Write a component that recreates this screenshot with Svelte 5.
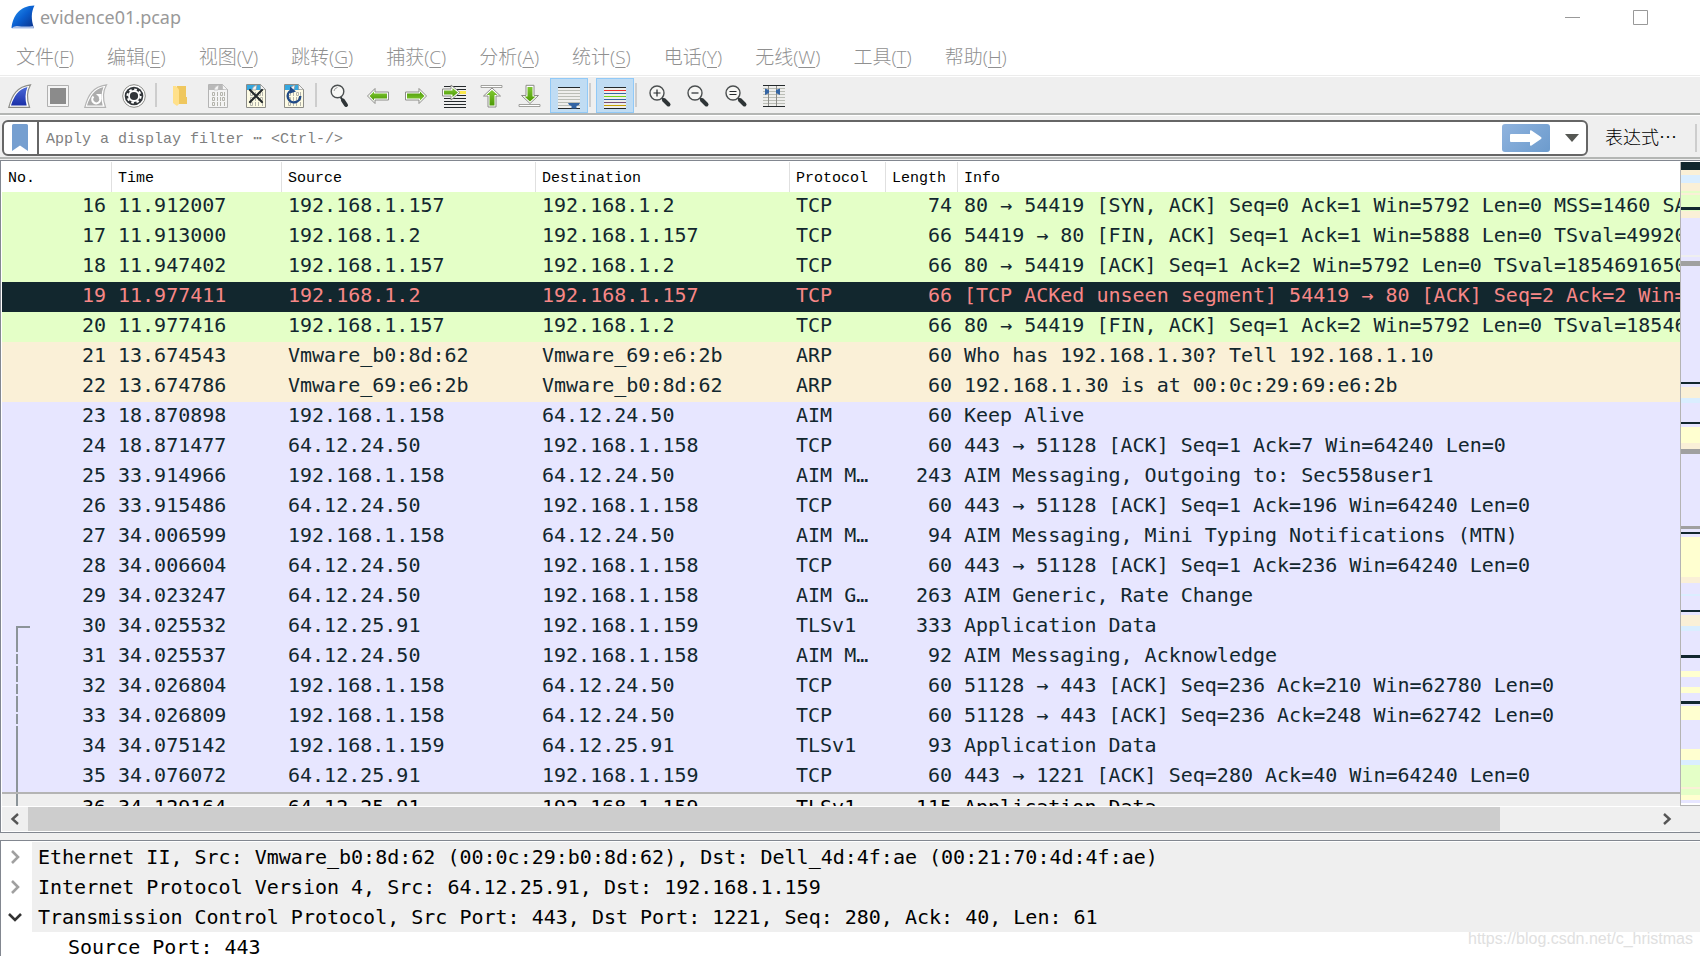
<script>
  const menus = [
    ["文件", "F"],
    ["编辑", "E"],
    ["视图", "V"],
    ["跳转", "G"],
    ["捕获", "C"],
    ["分析", "A"],
    ["统计", "S"],
    ["电话", "Y"],
    ["无线", "W"],
    ["工具", "T"],
    ["帮助", "H"],
  ]

  const toolGroups = [
    ["start", "stop", "restart", "options"],
    ["open", "save", "close", "reload"],
    ["find", "back", "forward", "goto", "first", "last", "autoscroll"],
    ["colorize"],
    ["zoomIn", "zoomOut", "zoomReset", "resize"],
  ]

  const titles = {
    start: "开始捕获",
    stop: "停止捕获",
    restart: "重新开始捕获",
    options: "捕获选项",
    open: "打开",
    save: "保存",
    close: "关闭",
    reload: "重新加载",
    find: "查找分组",
    back: "后退",
    forward: "前进",
    goto: "转到分组",
    first: "首个分组",
    last: "最新分组",
    autoscroll: "自动滚动",
    colorize: "着色",
    zoomIn: "放大",
    zoomOut: "缩小",
    zoomReset: "普通大小",
    resize: "调整列宽",
  }

  let active = $state({ autoscroll: true, colorize: true })
  let filter = $state("")

  const columns = ["No.", "Time", "Source", "Destination", "Protocol", "Length", "Info"]

  const packets = [
    ["tcp", 16, "11.912007", "192.168.1.157", "192.168.1.2", "TCP", 74, "80 → 54419 [SYN, ACK] Seq=0 Ack=1 Win=5792 Len=0 MSS=1460 SA"],
    ["tcp", 17, "11.913000", "192.168.1.2", "192.168.1.157", "TCP", 66, "54419 → 80 [FIN, ACK] Seq=1 Ack=1 Win=5888 Len=0 TSval=49920"],
    ["tcp", 18, "11.947402", "192.168.1.157", "192.168.1.2", "TCP", 66, "80 → 54419 [ACK] Seq=1 Ack=2 Win=5792 Len=0 TSval=1854691650"],
    ["bad", 19, "11.977411", "192.168.1.2", "192.168.1.157", "TCP", 66, "[TCP ACKed unseen segment] 54419 → 80 [ACK] Seq=2 Ack=2 Win="],
    ["tcp", 20, "11.977416", "192.168.1.157", "192.168.1.2", "TCP", 66, "80 → 54419 [FIN, ACK] Seq=1 Ack=2 Win=5792 Len=0 TSval=18546"],
    ["arp", 21, "13.674543", "Vmware_b0:8d:62", "Vmware_69:e6:2b", "ARP", 60, "Who has 192.168.1.30? Tell 192.168.1.10"],
    ["arp", 22, "13.674786", "Vmware_69:e6:2b", "Vmware_b0:8d:62", "ARP", 60, "192.168.1.30 is at 00:0c:29:69:e6:2b"],
    ["plain", 23, "18.870898", "192.168.1.158", "64.12.24.50", "AIM", 60, "Keep Alive"],
    ["plain", 24, "18.871477", "64.12.24.50", "192.168.1.158", "TCP", 60, "443 → 51128 [ACK] Seq=1 Ack=7 Win=64240 Len=0"],
    ["plain", 25, "33.914966", "192.168.1.158", "64.12.24.50", "AIM M…", 243, "AIM Messaging, Outgoing to: Sec558user1"],
    ["plain", 26, "33.915486", "64.12.24.50", "192.168.1.158", "TCP", 60, "443 → 51128 [ACK] Seq=1 Ack=196 Win=64240 Len=0"],
    ["plain", 27, "34.006599", "192.168.1.158", "64.12.24.50", "AIM M…", 94, "AIM Messaging, Mini Typing Notifications (MTN)"],
    ["plain", 28, "34.006604", "64.12.24.50", "192.168.1.158", "TCP", 60, "443 → 51128 [ACK] Seq=1 Ack=236 Win=64240 Len=0"],
    ["plain", 29, "34.023247", "64.12.24.50", "192.168.1.158", "AIM G…", 263, "AIM Generic, Rate Change"],
    ["plain", 30, "34.025532", "64.12.25.91", "192.168.1.159", "TLSv1", 333, "Application Data"],
    ["plain", 31, "34.025537", "64.12.24.50", "192.168.1.158", "AIM M…", 92, "AIM Messaging, Acknowledge"],
    ["plain", 32, "34.026804", "192.168.1.158", "64.12.24.50", "TCP", 60, "51128 → 443 [ACK] Seq=236 Ack=210 Win=62780 Len=0"],
    ["plain", 33, "34.026809", "192.168.1.158", "64.12.24.50", "TCP", 60, "51128 → 443 [ACK] Seq=236 Ack=248 Win=62742 Len=0"],
    ["plain", 34, "34.075142", "192.168.1.159", "64.12.25.91", "TLSv1", 93, "Application Data"],
    ["plain", 35, "34.076072", "64.12.25.91", "192.168.1.159", "TCP", 60, "443 → 1221 [ACK] Seq=280 Ack=40 Win=64240 Len=0"],
    ["selected", 36, "34.129164", "64.12.25.91", "192.168.1.159", "TLSv1", 115, "Application Data"],
  ]

  // which piece of the conversation line a packet carries
  function lineOf(no) {
    if (no < 30) return ""
    if (no === 30) return "line-start"
    return no < 34 ? "line-other" : "line-in"
  }

  // k bad tcp, t arp, b http, g tcp, l plain, y tls, e ignored, m marked
  const overview =
    "k8 t5 b8 t8 g2 t2 g12 k3 g1 t7 l37 e2 l4 m5 l116 k2 l3 t11 b5 l19 k2 l3 y16 t6 m5 l72 m3 l3 k2 l3 y40 t6 l11 b2 l14 k2 l3 t11 b5 l24 k3 l13 y6 l10 y6 l8 k3 l2 y14 l29 y11 b5 g22 t2 g6 y5 l3 w2"
      .split(" ")
      .map(s => ({ kind: s[0], size: Number(s.slice(1)) }))

  const details = [
    { open: false, text: "Ethernet II, Src: Vmware_b0:8d:62 (00:0c:29:b0:8d:62), Dst: Dell_4d:4f:ae (00:21:70:4d:4f:ae)" },
    { open: false, text: "Internet Protocol Version 4, Src: 64.12.25.91, Dst: 192.168.1.159" },
    { open: true, text: "Transmission Control Protocol, Src Port: 443, Dst Port: 1221, Seq: 280, Ack: 40, Len: 61", fields: ["Source Port: 443"] },
  ]
</script>

{#snippet page(fold, body, edge)}
  <path d="M2.500.5h14l5 5v18h-19z" fill={body} stroke={edge} />
  <path d="M3 1h13.500l1.500 5H3z" fill={fold} />
  <path d="M8 6q.5-4 5-5l-1 5zM16.500.5v5h5z" fill="#f4f4f4" stroke={edge} stroke-width=".6" />
  <g fill="none" stroke="#b4b4ac">
    <path d="M6.500 8.500h2v3h-2zM11.500 8v4M14.500 8.500h2v3h-2zM18.500 8v4M6.500 13.500h2v3h-2zM11.500 13v4M14.500 13v4M16.500 13.500h2v3h-2zM6.500 18.500h2v3h-2zM11.500 18v4M14.500 18v4M18.500 18v4" />
  </g>
{/snippet}

{#snippet lens()}
  <path d="M14 14l2 2" stroke="#2e3436" stroke-width="2" />
  <path d="M16 16l4.500 4.500" stroke="#2e3436" stroke-width="4" stroke-linecap="round" />
  <circle cx="9" cy="9" r="7" fill="#f6f6f4" stroke="#4b4f50" stroke-width="1.400" />
{/snippet}

{#snippet arrow()}
  <path d="M1.500 12 9 4.500V8h13.500v8H9v3.500z" fill="#fff" stroke="#8c8c88" stroke-linejoin="round" />
  <path d="M3.500 12 8 7.500v2h13v5H8v2z" fill="url(#green)" />
{/snippet}

{#snippet icon(name)}
  <svg width="24" height="24" viewBox="0 0 24 24" fill="none" aria-hidden="true">
    {#if name === "start"}
      <path d="M.8 23.300C4 11 9 2.500 22.500.8 19 7 18.500 15 21.500 23.300z" fill="#fff" stroke="#8c8c88" stroke-width="1.200" />
      <path d="M3 21.500C6 12 10.500 5 19.500 3c-2.500 6-2.500 12.500-.8 18.500z" fill="url(#fin)" />
    {:else if name === "stop"}
      <path d="M1.500 1.500h21v21h-21z" fill="#f4f4f4" stroke="#b0b0b0" />
      <path d="M4 4h16v16H4z" fill="#8b8b8b" />
    {:else if name === "restart"}
      <path d="M.8 23.300C4 11 9 2.500 22.500.8 19 7 18.500 15 21.500 23.300z" fill="#fff" stroke="#b4b4b4" stroke-width="1.200" />
      <path d="M3 21.500C6 12 10.500 5 19.500 3c-2.500 6-2.500 12.500-.8 18.500z" fill="#adadad" />
      <path d="M9.500 12.500a4 4 0 1 0 6 .5" stroke="#fff" stroke-width="2.200" />
      <path d="M12 10h5.500v5.500z" fill="#fff" />
    {:else if name === "options"}
      <circle cx="12" cy="12" r="11.300" fill="#fff" stroke="#8c8c88" />
      <circle cx="12" cy="12" r="9.300" fill="#32363a" />
      <circle cx="12" cy="12" r="5" stroke="#fff" stroke-width="1.800" />
      <circle cx="12" cy="12" r="6.600" stroke="#fff" stroke-width="2" stroke-dasharray="2.600 2.584" />
      <circle cx="12" cy="12" r="2.800" fill="#32363a" />
    {:else if name === "open"}
      <path d="M9 2h9v11h1v7H9z" fill="#efc75e" />
      <path d="M5 2h3l3 3.500V20l-2 2-4-3z" fill="#ffe08a" />
    {:else if name === "save"}
      {@render page("#b9b9b9", "#f4f4f4", "#b4b4b4")}
    {:else if name === "close"}
      {@render page("#35a8e0", "#fdfbe4", "#8c8c88")}
      <path d="M6 6l12 12M18 6 6 18" stroke="#24292b" stroke-width="2.200" stroke-linecap="round" />
    {:else if name === "reload"}
      {@render page("#35a8e0", "#fdfbe4", "#8c8c88")}
      <path d="M9 6.500A6.300 6.300 0 1 0 18.300 12" stroke="#204a87" stroke-width="2.400" />
      <path d="M8 2.500v7l6-2z" fill="#204a87" />
    {:else if name === "find"}
      <path d="M12.500 13l2 3" stroke="#2e3436" stroke-width="2" />
      <path d="M15 16.500l3 4.500" stroke="#2e3436" stroke-width="4" stroke-linecap="round" />
      <circle cx="9.500" cy="7.500" r="6.300" fill="#f8f8f6" stroke="#4b4f50" stroke-width="1.400" />
      <path d="M6 7q.5-3 3.500-3.500" stroke="#999" />
    {:else if name === "back"}
      {@render arrow()}
    {:else if name === "forward"}
      <g transform="rotate(180 12 12)">{@render arrow()}</g>
    {:else if name === "goto"}
      <path d="M2 2.500h22M2 5.500h22M2 11.500h22M2 14.500h22M2 17.500h22M2 20.500h22M2 23.500h22" stroke="#24292b" />
      <path d="M17 8.500h7" stroke="#fce94f" stroke-width="3" />
      <path d="M.5 5H9V1l9 7.500L9 16v-4H.5z" fill="#fff" stroke="#8c8c88" stroke-linejoin="round" />
      <path d="M2 6.500h8.500V4l5.500 4.500-5.500 4.500v-2.500H2z" fill="url(#green)" />
    {:else if name === "first"}
      <path d="M1 1.500h21v2H1z" fill="#fff" stroke="#8c8c88" stroke-width=".8" />
      <path d="M12 4l8.500 8H16v11H8V12H3.500z" fill="#fff" stroke="#8c8c88" stroke-linejoin="round" />
      <path d="M12 6l5.500 5h-3v10.500h-5V11h-3z" fill="url(#green)" />
    {:else if name === "last"}
      <path d="M1 20.500h21v2H1z" fill="#fff" stroke="#8c8c88" stroke-width=".8" />
      <path d="M12 19.500l8.500-8H16V1.300H8v10.200H3.500z" fill="#fff" stroke="#8c8c88" stroke-linejoin="round" />
      <path d="M12 17.500l5.500-5h-3V3h-5v9.500h-3z" fill="url(#green)" />
    {:else if name === "autoscroll"}
      <path d="M1 3h22v22H1z" fill="#eeeeec" />
      <path d="M1 6.500h22M1 9.500h22M1 12.500h22M1 15.500h22M1 18.500h22M1 21.500h22" stroke="#babdb6" />
      <path d="M1 3.500h22M1 24.500h22" stroke="#24292b" />
      <path d="M11 19h12q-.5 2.500-3.500 3v2.500h-5V22q-3-.5-3.500-3z" fill="#3465a4" />
    {:else if name === "colorize"}
      <path d="M1 3h22v22H1z" fill="#eeeeec" />
      <path d="M1 3.500h22M1 24.500h22" stroke="#24292b" />
      <path d="M1 6.500h22" stroke="#ef2929" />
      <path d="M1 9.500h22" stroke="#3465a4" />
      <path d="M1 12.500h22" stroke="#73d216" />
      <path d="M1 15.500h22" stroke="#3465a4" />
      <path d="M1 18.500h22" stroke="#75507b" />
      <path d="M1 21.500h22" stroke="#c4a000" />
    {:else if name === "zoomIn"}
      {@render lens()}
      <path d="M5.500 9h7M9 5.500v7" stroke="#24292b" stroke-width="1.200" />
    {:else if name === "zoomOut"}
      {@render lens()}
      <path d="M5.500 9h7" stroke="#24292b" stroke-width="1.200" />
    {:else if name === "zoomReset"}
      {@render lens()}
      <path d="M5.500 7.500h7M5.500 10.500h7" stroke="#24292b" stroke-width="1.200" />
    {:else if name === "resize"}
      <path d="M1 1h22v22H1z" fill="#eeeeec" />
      <path d="M1 4.500h22M1 7.500h22M1 10.500h22M1 13.500h22M1 16.500h22M1 19.500h22" stroke="#babdb6" />
      <path d="M6.500 1v22M14.500 1v22" stroke="#8c8c88" />
      <path d="M1 1.500h22M1 22.500h22" stroke="#24292b" />
      <path d="M3 4.500l4 1.500v3l-4 2zM18 4.500l-4 1.500v3l4 2z" fill="#3465a4" />
    {/if}
  </svg>
{/snippet}

<div class="window">
  <header class="titlebar">
    <svg class="logo" width="24" height="24" viewBox="0 0 24 24" aria-hidden="true">
      <defs>
        <linearGradient id="logoFill" x1="0" y1="0" x2="1" y2="1">
          <stop offset="0" stop-color="#2b9cf5" />
          <stop offset=".5" stop-color="#0a5fd0" />
          <stop offset="1" stop-color="#0b2f86" />
        </linearGradient>
        <linearGradient id="fin" x1="0" y1="0" x2="0" y2="1">
          <stop offset="0" stop-color="#4a68d8" />
          <stop offset="1" stop-color="#1a2fa8" />
        </linearGradient>
        <linearGradient id="green" x1="0" y1="0" x2="0" y2="1">
          <stop offset="0" stop-color="#7fc832" />
          <stop offset="1" stop-color="#4e9a06" />
        </linearGradient>
      </defs>
      <path d="M.5 23C2 11 8 1 23.500.5 20 7 20 15 23 23z" fill="url(#logoFill)" />
      <path d="M.5 23.500q2-3 6-2.500t8 .5 8-.5l.5 2.500z" fill="#a9bfe8" />
    </svg>
    <h1>evidence01.pcap</h1>
    <div class="controls">
      <button aria-label="最小化">
        <svg width="15" height="16" viewBox="0 0 15 16"><path d="M0 8.500h15" stroke="#999" /></svg>
      </button>
      <button aria-label="最大化">
        <svg width="15" height="16" viewBox="0 0 15 16"><path d="M.5 1.500h14v14H.5z" fill="none" stroke="#999" /></svg>
      </button>
    </div>
  </header>

  <nav class="menubar">
    {#each menus as [label, key]}
      <button>{label}(<u>{key}</u>)</button>
    {/each}
  </nav>

  <div class="toolbar" role="toolbar">
    {#each toolGroups as group, i}
      {#if i > 0}<span class="sep"></span>{/if}
      {#each group as name}
        <button class:active={active[name]} aria-label={titles[name]} title={titles[name]}>
          {@render icon(name)}
        </button>
      {/each}
    {/each}
  </div>

  <div class="filterbar">
    <div class="filter">
      <button class="bookmark" aria-label="管理过滤器">
        <svg width="16" height="27" viewBox="0 0 16 27"><path d="M0 1.500Q0 0 1.500 0h13Q16 0 16 1.500V27l-8-5.500L0 27z" fill="#769fd0" /></svg>
      </button>
      <input type="text" bind:value={filter} aria-label="显示过滤器" placeholder="Apply a display filter ⋯ <Ctrl-/>" />
      <button class="apply" aria-label="应用过滤器">
        <svg width="32" height="16" viewBox="0 0 32 16"><path d="M1 4h19V1q0-1 1.500-.5L31 7q1 1 0 2l-9.500 6.500Q20 16 20 15v-3H1q-1 0-1-1V5q0-1 1-1z" fill="#fff" /></svg>
      </button>
      <button class="recent" aria-label="最近的过滤器">
        <svg width="14" height="8" viewBox="0 0 14 8"><path d="M0 0h14L7 8z" fill="#555753" /></svg>
      </button>
    </div>
    <button class="expression">表达式…</button>
    <span class="sep"></span>
  </div>

  <main class="packets">
    <div class="list">
      <div class="viewport">
        <table>
          <colgroup>
            <col class="c-no" />
            <col class="c-time" />
            <col class="c-addr" />
            <col class="c-addr" />
            <col class="c-proto" />
            <col class="c-len" />
            <col />
          </colgroup>
          <thead>
            <tr>
              {#each columns as column}
                <th scope="col">{column}</th>
              {/each}
            </tr>
          </thead>
          <tbody>
            {#each packets as [kind, no, time, source, destination, protocol, length, info]}
              <tr class={kind}>
                <td class="num {lineOf(no)}">{no}</td>
                <td>{time}</td>
                <td>{source}</td>
                <td>{destination}</td>
                <td>{protocol}</td>
                <td class="num">{length}</td>
                <td class="info">{info}</td>
              </tr>
            {/each}
          </tbody>
        </table>
      </div>
      <div class="hscroll">
        <button aria-label="向左滚动">
          <svg width="10" height="12" viewBox="0 0 10 12"><path d="M8 1 2.500 6 8 11" fill="none" stroke="#555" stroke-width="2.400" /></svg>
        </button>
        <div class="track"><div class="thumb"></div></div>
        <button aria-label="向右滚动">
          <svg width="10" height="12" viewBox="0 0 10 12"><path d="M2 1l5.500 5L2 11" fill="none" stroke="#555" stroke-width="2.400" /></svg>
        </button>
      </div>
    </div>
    <div class="overview">
      <div class="stripes">
        {#each overview as stripe}
          <i class={stripe.kind} style="flex-grow: {stripe.size}"></i>
        {/each}
      </div>
    </div>
  </main>

  <section class="details">
    <ul>
      {#each details as item}
        <li>
          <div class="node">
            <button class:open={item.open} aria-label="展开" aria-expanded={item.open}>
              <svg width="14" height="14" viewBox="0 0 14 14"><path d="M4 1l6 6-6 6" fill="none" stroke="currentColor" stroke-width="2.600" /></svg>
            </button>
            <span>{item.text}</span>
          </div>
          {#if item.open}
            {#each item.fields as field}
              <div class="field">{field}</div>
            {/each}
          {/if}
        </li>
      {/each}
    </ul>
    <a class="watermark" href="https://blog.csdn.net/c_hristmas">https://blog.csdn.net/c_hristmas</a>
  </section>
</div>

<style>
  :global(body) {
    background: #efefef;
  }

  .window {
    display: flex;
    flex-direction: column;
    height: 100vh;
    overflow: hidden;
    background: #efefef;
    color: #000;
    font-family: "DejaVu Sans Mono", "Noto Sans CJK SC", monospace;
    font-size: 20px;
  }

  button {
    display: flex;
    align-items: center;
    justify-content: center;
    margin: 0;
    padding: 0;
    border: 0;
    background: none;
    color: inherit;
    font: inherit;
  }

  svg {
    display: block;
    flex: none;
    overflow: visible;
  }

  .titlebar {
    display: flex;
    align-items: center;
    gap: 5px;
    height: 34px;
    padding-left: 11px;
    background: #fff;
  }

  h1 {
    flex: 1;
    margin: 0;
    color: #999;
    font: 400 18px/24px "Noto Sans", sans-serif;
  }

  .controls {
    display: flex;
    padding-right: 26px;
  }

  .controls button {
    width: 68px;
    height: 34px;
  }

  .menubar {
    display: flex;
    gap: 33px;
    height: 35px;
    padding: 6px 0 0 16px;
    background: #fff;
    border-bottom: 1px solid #ececec;
    color: #909090;
    font: 19px/35px "Open Sans", "Noto Sans CJK SC", sans-serif;
  }

  .menubar button {
    font-weight: 300;
  }

  u {
    text-underline-offset: 3px;
  }

  .toolbar {
    display: flex;
    padding: 1px 2px 0;
    border-top: 1px solid #fff;
    border-bottom: 2px solid #b4b6b4;
  }

  .toolbar button {
    box-sizing: border-box;
    width: 38px;
    height: 35px;
    padding: 1px 2px 0 0;
    border: 1px solid transparent;
  }

  .toolbar button.active {
    padding-right: 0;
    border-color: #91c9f7;
    background: #c0dcf3;
  }

  .toolbar .sep {
    width: 2px;
    height: 24px;
    margin: 5px 5px 0 1px;
    background: #cdcdcd;
  }

  .filterbar {
    display: flex;
    align-items: center;
    height: 40px;
    padding: 2px 3px 0 2px;
    box-sizing: border-box;
    height: 44px;
    border-top: 1px solid #fff;
    border-bottom: 2px solid #b4b6b4;
  }

  .filter {
    display: flex;
    flex: 1;
    align-items: center;
    height: 32px;
    border: 2px solid #666;
    border-radius: 6px;
    background: #fff;
  }

  .bookmark {
    width: 35px;
    height: 32px;
    padding-right: 2px;
    box-sizing: border-box;
    border-right: 2px solid #666;
  }

  input {
    box-sizing: border-box;
    flex: 1;
    min-width: 0;
    height: 32px;
    padding: 4px 7px 0;
    border: 0;
    outline: 0;
    background: none;
    font: 15px "Liberation Mono", "DejaVu Sans Mono", monospace;
  }

  input::placeholder {
    color: #808080;
    opacity: 1;
  }

  .apply {
    width: 48px;
    height: 28px;
    border-radius: 3px;
    background: linear-gradient(135deg, #8fb3de, #6c9bcd);
  }

  .recent {
    width: 36px;
    height: 28px;
    padding-left: 8px;
  }

  .expression {
    margin: 0 18px 0 17px;
    padding-bottom: 4px;
    font: 300 18px/30px "Noto Sans CJK SC", sans-serif;
  }

  .filterbar .sep {
    width: 2px;
    height: 28px;
    background: #cdcdcd;
  }

  .packets {
    display: flex;
    flex: 1;
    min-height: 0;
    margin-top: 1px;
    border: 1px solid #828790;
    border-right: 0;
  }

  .list {
    display: flex;
    flex: 1;
    flex-direction: column;
    min-width: 0;
    padding: 1px 0 0 1px;
    background: #fff;
  }

  .viewport {
    flex: 1;
    min-height: 0;
    overflow: hidden;
  }

  table {
    width: 100%;
    table-layout: fixed;
    border-collapse: separate;
    border-spacing: 0;
  }

  .c-no {
    width: 110px;
  }

  .c-time {
    width: 170px;
  }

  .c-addr {
    width: 254px;
  }

  .c-proto {
    width: 96px;
  }

  .c-len {
    width: 72px;
  }

  th {
    box-sizing: border-box;
    height: 30px;
    padding: 3px 6px 0;
    border-right: 1px solid #e0e0e0;
    font: 400 15px/27px "Liberation Mono", monospace;
    text-align: left;
  }

  th:last-child {
    border-right: 0;
  }

  td {
    box-sizing: border-box;
    height: 30px;
    padding: 0 6px 4px;
    overflow: hidden;
    line-height: 26px;
    white-space: nowrap;
  }

  .info {
    padding-right: 0;
  }

  .num {
    text-align: right;
  }

  .tcp {
    background: #e4ffc7;
    color: #12272e;
  }

  .arp {
    background: #faf0d7;
    color: #12272e;
  }

  .bad {
    background: #12272e;
    color: #f78787;
  }

  .plain {
    background: #e7e6ff;
    color: #12272e;
  }

  .selected {
    background: #efefef;
  }

  .selected td {
    padding-bottom: 2px;
    border-top: 2px solid #b4b4b4;
  }

  .line-start,
  .line-in,
  .line-other {
    background-repeat: no-repeat;
    background-image: linear-gradient(#8c9499, #8c9499), linear-gradient(#8c9499, #8c9499);
    background-position: 14px 0, 14px 0;
    background-size: 2px 100%, 2px 100%;
  }

  .line-start {
    background-position: 14px 14px, 14px 14px;
    background-size: 2px 100%, 14px 2px;
  }

  .line-other {
    background-image: linear-gradient(#8c9499 10px, transparent 10px 12px, #8c9499 12px 22px, transparent 22px 24px, #8c9499 24px);
    background-position: 14px 0;
    background-size: 2px 100%;
  }

  .hscroll {
    display: flex;
    height: 24px;
    border: 1px solid #fff;
    border-width: 1px 0;
    background: #efefef;
  }

  .hscroll button {
    width: 26px;
  }

  .track {
    flex: 1;
  }

  .thumb {
    width: 90.5%;
    height: 100%;
    background: #cdcdcd;
  }

  .overview {
    display: flex;
    flex-direction: column;
    width: 20px;
    padding: 1px 0 26px;
    background: linear-gradient(#fff 2px, #efefef 2px);
  }

  .stripes {
    display: flex;
    flex: 1;
    flex-direction: column;
    border-left: 1px solid #b4b4b4;
    border-bottom: 1px solid #b4b4b4;
  }

  .stripes i {
    flex-basis: 0;
  }

  .k {
    background: #12272e;
  }

  .t {
    background: #faf0d7;
  }

  .b {
    background: #daeeff;
  }

  .g {
    background: #e4ffc7;
  }

  .l {
    background: #e7e6ff;
  }

  .y {
    background: #ffffd0;
  }

  .e {
    background: #efefef;
  }

  .m {
    background: #a0a0a0;
  }

  .w {
    background: #fff;
  }

  .details {
    position: relative;
    height: 114px;
    margin-top: 7px;
    padding-top: 1px;
    overflow: hidden;
    border: 1px solid #828790;
    border-width: 1px 0 0 1px;
    background: #fff;
  }

  ul {
    margin: 0;
    padding: 0;
    list-style: none;
  }

  .node {
    display: flex;
    height: 30px;
    line-height: 30px;
    white-space: nowrap;
  }

  .node button {
    box-sizing: border-box;
    width: 31px;
    padding-right: 3px;
    color: #a0a0a0;
  }

  .node button.open {
    color: #333;
  }

  .node button.open svg {
    transform: rotate(90deg);
  }

  .node span {
    flex: 1;
    padding-left: 6px;
    background: #efefef;
  }

  .field {
    padding-left: 67px;
    line-height: 30px;
  }

  .watermark {
    position: absolute;
    right: 7px;
    bottom: 7px;
    color: #e0e0e0;
    font: 16px/20px "Liberation Sans", sans-serif;
    text-decoration: none;
  }
</style>
